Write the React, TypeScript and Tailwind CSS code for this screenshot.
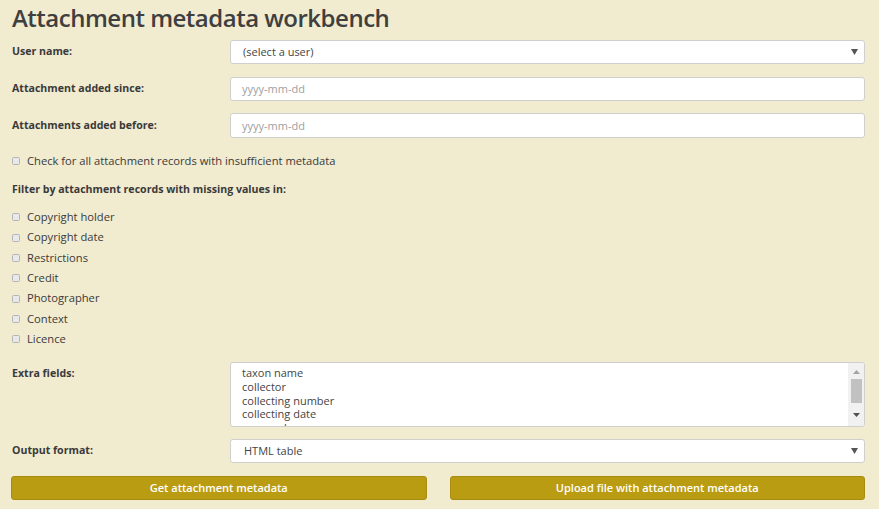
import React from "react";

const font = { fontFamily: '"Open Sans", "Liberation Sans", sans-serif' };

function Label({ children }: { children: React.ReactNode }) {
  return (
    <div className="w-[218px] shrink-0 text-[10.6px] font-bold text-[#3a3a3a]">{children}</div>
  );
}

function Check({ label }: { label: string }) {
  return (
    <div className="flex h-[20.3px] items-center">
      <span className="ml-[12px] inline-block h-[8px] w-[8px] rounded-[1.5px] border border-[#b5b5b5] bg-[#e9e9e9]" />
      <span className="ml-[7px] text-[11.2px] text-[#3a3a3a]">{label}</span>
    </div>
  );
}

function Arrow() {
  return (
    <svg width="7" height="6" viewBox="0 0 7 6" className="absolute right-[6px] top-1/2 -translate-y-1/2">
      <path d="M0 0 L7 0 L3.5 6 Z" fill="#555" />
    </svg>
  );
}

export default function App() {
  return (
    <div className="min-h-[509px] w-full bg-[#f1ebd0]" style={font}>
      <div className="pl-[12px] pr-[14px]">
        <h1 className="h-[36px] text-[24px] leading-[36px] font-semibold tracking-[-0.5px] text-[#3f3f3f]">
          Attachment metadata workbench
        </h1>

        <div className="mt-[4px] flex h-[24px] items-center">
          <Label>User name:</Label>
          <div className="relative h-[24px] flex-1 rounded-[3px] border border-[#cfcfcf] bg-white">
            <span className="absolute left-[12px] top-1/2 -translate-y-1/2 text-[11px] text-[#444]">(select a user)</span>
            <Arrow />
          </div>
        </div>

        <div className="mt-[13px] flex h-[24px] items-center">
          <Label>Attachment added since:</Label>
          <div className="relative h-[24px] flex-1 rounded-[3px] border border-[#cfcfcf] bg-white">
            <span className="absolute left-[11px] top-1/2 -translate-y-1/2 text-[11px] text-[#a0a0a0]">yyyy-mm-dd</span>
          </div>
        </div>

        <div className="mt-[12px] flex h-[25px] items-center">
          <Label>Attachments added before:</Label>
          <div className="relative h-[25px] flex-1 rounded-[3px] border border-[#cfcfcf] bg-white">
            <span className="absolute left-[11px] top-1/2 -translate-y-1/2 text-[11px] text-[#a0a0a0]">yyyy-mm-dd</span>
          </div>
        </div>

        <div className="-ml-[12px] mt-[13px]">
          <Check label="Check for all attachment records with insufficient metadata" />
        </div>

        <div className="mt-[9px] flex h-[20px] items-center text-[10.6px] font-bold text-[#3a3a3a]">
          Filter by attachment records with missing values in:
        </div>

        <div className="-ml-[12px] mt-[7px] flex flex-col">
          {["Copyright holder", "Copyright date", "Restrictions", "Credit", "Photographer", "Context", "Licence"].map((l) => (
            <Check key={l} label={l} />
          ))}
        </div>

        <div className="mt-[13px] flex h-[65px] items-start">
          <div className="pt-[4px]">
            <Label>Extra fields:</Label>
          </div>
          <div className="relative flex h-[65px] flex-1 overflow-hidden rounded-[3px] border border-[#cfcfcf] bg-white">
            <div className="flex-1 overflow-hidden pl-[11px] pt-[3px] text-[11px] leading-[13.6px] text-[#444]">
              <div>taxon name</div>
              <div>collector</div>
              <div>collecting number</div>
              <div>collecting date</div>
              <div>geography</div>
            </div>
            <div className="relative flex w-[16px] flex-col items-center bg-[#f1f1f1]">
              <svg width="7" height="4" viewBox="0 0 7 4" className="mt-[7px]">
                <path d="M0 4 L7 4 L3.5 0 Z" fill="#a3a3a3" />
              </svg>
              <div className="mt-[5px] h-[24px] w-[11px] bg-[#c1c1c1]" />
              <svg width="7" height="4" viewBox="0 0 7 4" className="mt-[10px]">
                <path d="M0 0 L7 0 L3.5 4 Z" fill="#505050" />
              </svg>
            </div>
          </div>
        </div>

        <div className="mt-[12px] flex h-[24px] items-center">
          <Label>Output format:</Label>
          <div className="relative h-[24px] flex-1 rounded-[3px] border border-[#cfcfcf] bg-white">
            <span className="absolute left-[13px] top-1/2 -translate-y-1/2 text-[11px] text-[#444]">HTML table</span>
            <Arrow />
          </div>
        </div>

        <div className="-ml-[1px] mt-[13px] flex gap-[23px]">
          <button className="h-[24px] flex-1 rounded-[3px] border border-[#a68c10] bg-[#b99c12] text-[11px] font-semibold text-white">
            Get attachment metadata
          </button>
          <button className="h-[24px] flex-1 rounded-[3px] border border-[#a68c10] bg-[#b99c12] text-[11px] font-semibold text-white">
            Upload file with attachment metadata
          </button>
        </div>
      </div>
    </div>
  );
}
